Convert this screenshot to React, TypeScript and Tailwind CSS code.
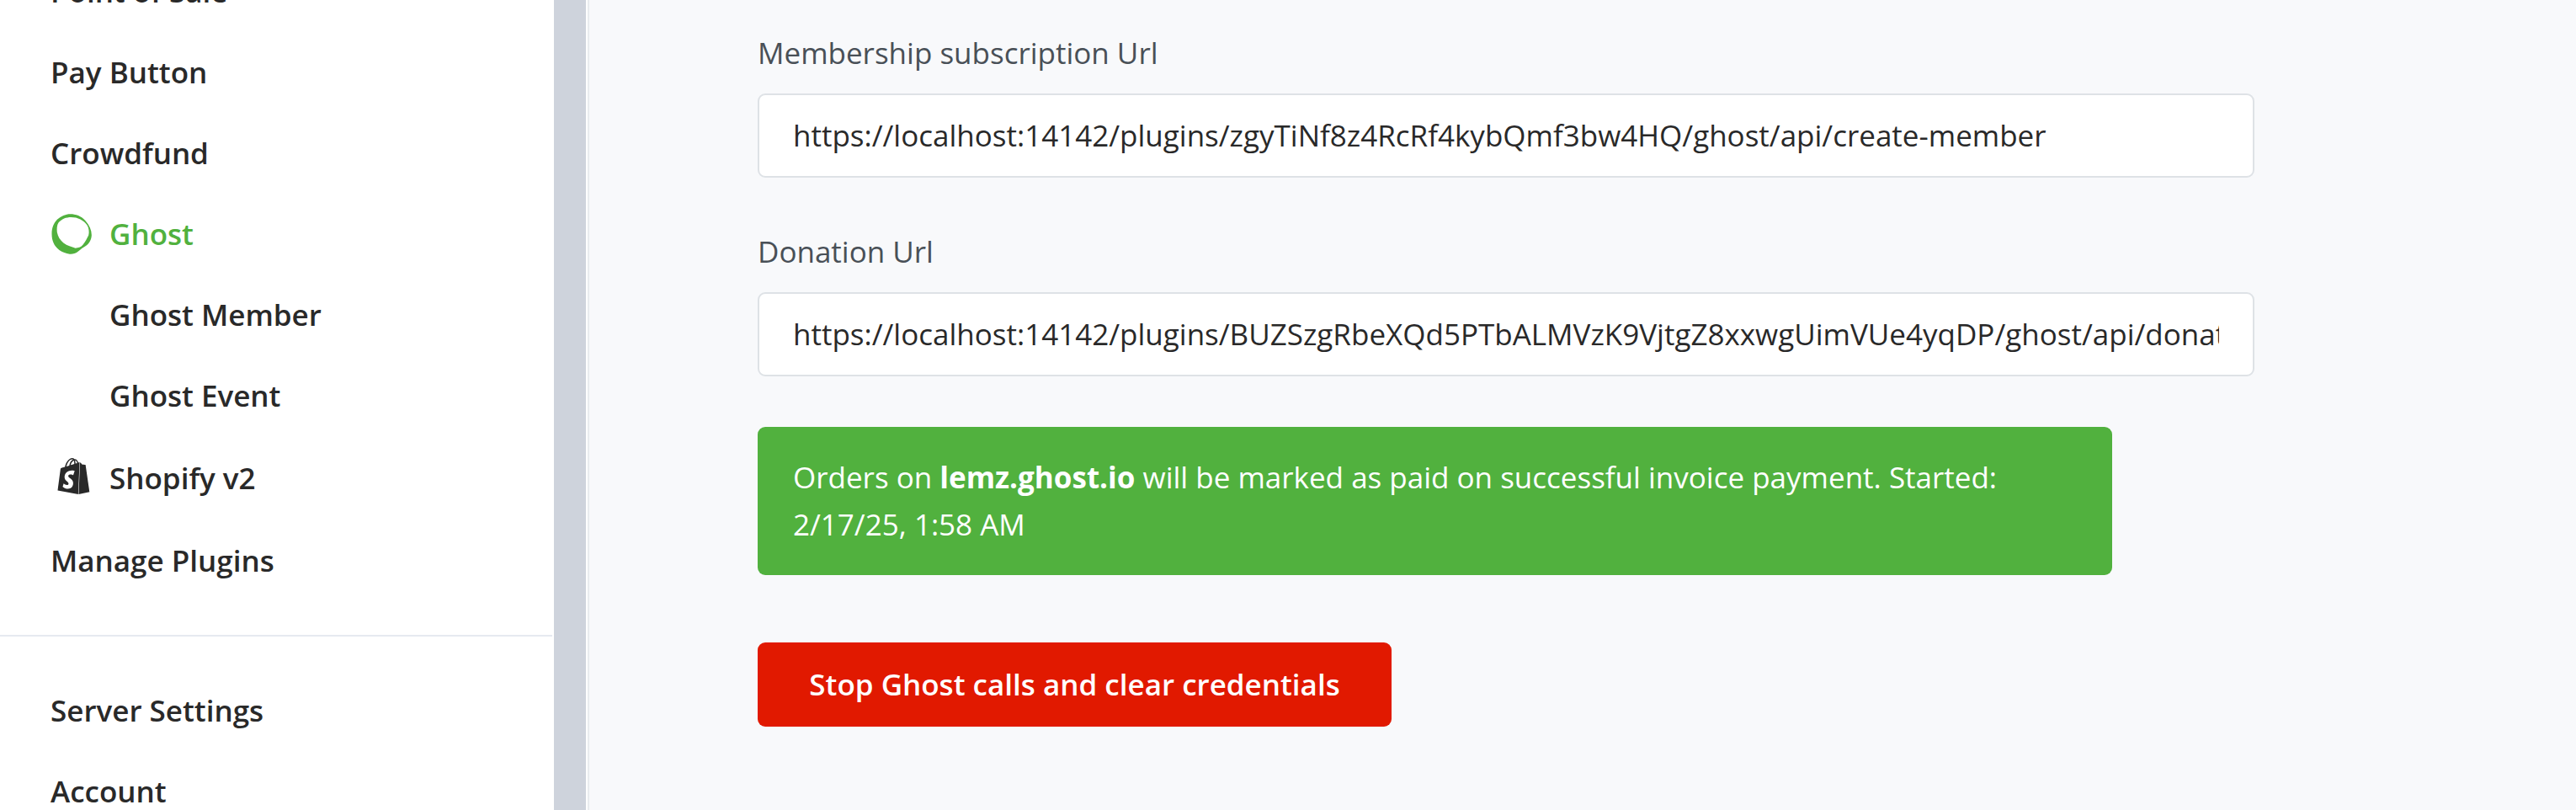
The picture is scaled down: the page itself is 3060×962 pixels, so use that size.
import type { ReactNode } from "react";
import { SiShopify } from "react-icons/si";

function GhostIcon() {
  return (
    <svg viewBox="63 42 144 145" className="h-12 w-12" fill="currentColor">
      <path
        fillRule="evenodd"
        d="M131 43C150 43 170 50 185 67C199 83 207 100 207 118C206 138 195 153 178 162C169 166 164 174 157 178C149 184 139 187 128 186C115 185 102 179 91 172C72 158 64 138 64 114C64 92 71 75 84 62C97 50 113 43 131 43ZM133 54C116 54 99 60 88 74C82 84 82 96 83 108C86 124 94 137 106 146C119 156 136 160 149 165C159 164 168 163 175 154C185 142 190 130 196 119C199 106 197 94 192 84C178 64 158 54 133 54Z"
      />
    </svg>
  );
}

type NavItemProps = { label: string; icon?: ReactNode; indent?: boolean; active?: boolean; tall?: boolean };

function NavItem({ label, icon, indent, active, tall }: NavItemProps) {
  return (
    <a
      className={`flex shrink-0 items-center font-semibold ${tall ? "h-[100px]" : "h-24"} ${
        active ? "text-[#51b13e]" : "text-[#292929]"
      }`}
    >
      {(icon || indent) && <span className="flex w-[70px] shrink-0 items-center">{icon}</span>}
      {label}
    </a>
  );
}

function Field({ label, value }: { label: string; value: string }) {
  return (
    <div className="flex w-[1778px] flex-col">
      <label className="h-[77px] pt-px leading-[56px] text-[#495057]">{label}</label>
      <div className="flex h-[100px] items-center rounded-[9px] border-2 border-[#dee2e6] bg-white px-10 pb-px">
        <span className="min-w-0 flex-1 overflow-hidden whitespace-nowrap text-[#292929]">{value}</span>
      </div>
    </div>
  );
}

export default function App() {
  return (
    <div className="flex h-[962px] w-[3060px] overflow-hidden bg-[#f8f9fb] font-['Open_Sans',sans-serif] text-[35px] leading-[56px]">
      <aside className="flex w-[700px] shrink-0 border-r-2 border-[#e9ecef] bg-white">
        <nav className="flex w-[656px] shrink-0 flex-col">
          <div className="-mt-[58px] flex flex-col pl-[60px]">
            <NavItem label="Point of Sale" />
            <NavItem label="Pay Button" />
            <NavItem label="Crowdfund" />
            <NavItem label="Ghost" active icon={<span className="ml-px"><GhostIcon /></span>} />
            <NavItem label="Ghost Member" indent />
            <NavItem label="Ghost Event" indent />
            <NavItem label="Shopify v2" tall icon={<SiShopify className="mb-1.5 ml-[6px] h-[43px] w-[43px]" />} />
            <NavItem label="Manage Plugins" />
          </div>
          <hr className="mt-10 mb-10 border-t-2 border-[#e6eaf0]" />
          <div className="flex flex-col pl-[60px]">
            <NavItem label="Server Settings" />
            <NavItem label="Account" />
          </div>
        </nav>
        <div className="ml-0.5 w-[38px] bg-[#ced3dc]" />
      </aside>

      <main className="flex flex-col items-start pt-[34px] pl-[200px]">
        <Field
          label="Membership subscription Url"
          value="https://localhost:14142/plugins/zgyTiNf8z4RcRf4kybQmf3bw4HQ/ghost/api/create-member"
        />
        <div className="mt-[59px]">
          <Field
            label="Donation Url"
            value="https://localhost:14142/plugins/BUZSzgRbeXQd5PTbALMVzK9VjtgZ8xxwgUimVUe4yqDP/ghost/api/donate"
          />
        </div>
        <div className="mt-[60px] h-44 w-[1609px] rounded-[9px] bg-[#51b13e] px-[42px] pt-8 text-white">
          Orders on <b className="font-bold">lemz.ghost.io</b> will be marked as paid on successful invoice payment.
          Started: 2/17/25, 1:58 AM
        </div>
        <button className="mt-20 flex h-[100px] w-[753px] items-center justify-center rounded-[9px] bg-[#e11900] pb-px font-semibold text-white">
          Stop Ghost calls and clear credentials
        </button>
      </main>
    </div>
  );
}
